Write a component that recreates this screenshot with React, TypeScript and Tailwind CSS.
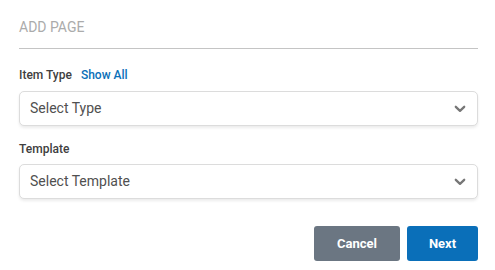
import React from "react";

function Chevron() {
  return (
    <svg width="12" height="8" viewBox="0 0 12 8" className="shrink-0">
      <path d="M1.8 1.8 L6 5.8 L10.2 1.8" fill="none" stroke="#777" strokeWidth="2.3" strokeLinecap="round" strokeLinejoin="round" />
    </svg>
  );
}

function Select({ label }: { label: string }) {
  return (
    <div className="flex h-[35px] items-center justify-between rounded-[5px] border border-[#dcdcdc] bg-white pl-[10px] pr-[11px] shadow-[0_2px_3px_rgba(0,0,0,0.08)]">
      <span className="text-[14px] text-[#505050]">{label}</span>
      <Chevron />
    </div>
  );
}

export default function App() {
  return (
    <div className="h-[270px] w-[495px] bg-white pl-[19px] pr-[17px] pt-[19px] text-[#333]" style={{ fontFamily: "Roboto, 'Liberation Sans', sans-serif" }}>
      <div className="border-b border-[#c4c4c4] pb-[13px] text-[14px] leading-[16px] text-[#ababab]">ADD PAGE</div>
      <div className="mt-[19px] flex items-center gap-[9px] text-[12px] leading-[14px] font-medium">
        <span className="text-[#404040]">Item Type</span>
        <span className="text-[#0a70b8]">Show All</span>
      </div>
      <div className="mt-[9px]">
        <Select label="Select Type" />
      </div>
      <div className="mt-[16px] text-[12px] leading-[14px] font-medium text-[#404040]">Template</div>
      <div className="mt-[8px]">
        <Select label="Select Template" />
      </div>
      <div className="mt-[27px] flex justify-end gap-[7px]">
        <button className="h-[35px] w-[86px] rounded-[3px] bg-[#6b7682] text-[13px] font-bold text-white">Cancel</button>
        <button className="h-[35px] w-[71px] rounded-[3px] bg-[#0a6fb9] text-[13px] font-bold text-white">Next</button>
      </div>
    </div>
  );
}
